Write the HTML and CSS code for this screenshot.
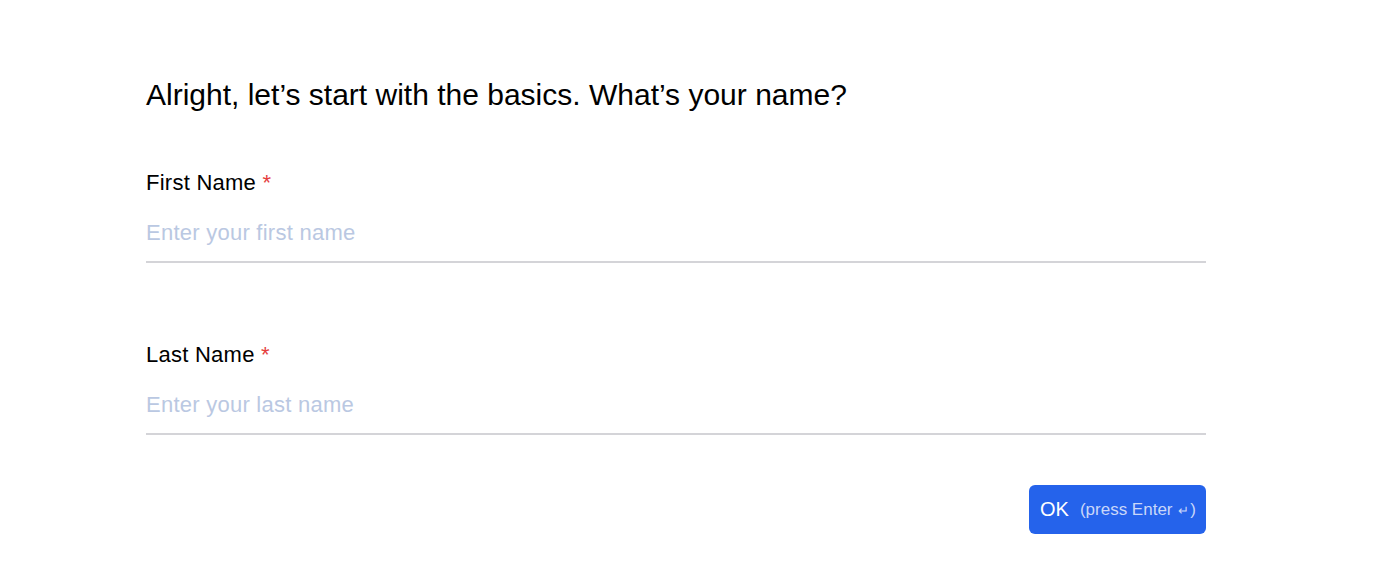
FILE: index.html
```html
<!DOCTYPE html>
<html lang="en">
<head>
<meta charset="utf-8">
<title>Name</title>
<link rel="stylesheet" href="styles.css">
</head>
<body>
<main class="page">
  <form class="form">
    <h1 class="question">Alright, let’s start with the basics. What’s your name?</h1>
    <div class="field">
      <label class="label" for="first">First Name <span class="req">*</span></label>
      <input class="input" id="first" type="text" placeholder="Enter your first name">
    </div>
    <div class="field">
      <label class="label" for="last">Last Name <span class="req">*</span></label>
      <input class="input" id="last" type="text" placeholder="Enter your last name">
    </div>
    <div class="actions">
      <button class="ok" type="button">OK <span class="hint">(press Enter <span class="arrow">↵</span>)</span></button>
    </div>
  </form>
</main>
</body>
</html>
```
FILE: styles.css
```css
html, body {
  margin: 0;
  padding: 0;
  background: #ffffff;
}
body {
  font-family: "Liberation Sans", Arial, sans-serif;
  color: #000000;
}
.page {
  padding: 77px 0 0 146px;
}
.form {
  width: 1060px;
  display: flex;
  flex-direction: column;
}
.question {
  margin: 0 0 57px;
  font-size: 30px;
  font-weight: 400;
  line-height: 36px;
}
.field {
  display: flex;
  flex-direction: column;
}
.field + .field {
  margin-top: 79px;
}
.label {
  font-size: 22px;
  line-height: 26px;
  margin-bottom: 24px;
  letter-spacing: 0.25px;
}
.req {
  color: #e53e3e;
}
.input {
  border: none;
  border-bottom: 2px solid #d4d4d8;
  outline: none;
  margin: 0;
  padding: 0 0 15px;
  font-family: "Liberation Sans", Arial, sans-serif;
  font-size: 22px;
  line-height: 26px;
  height: 26px;
  letter-spacing: 0.25px;
  color: #000;
  background: transparent;
}
.input::placeholder {
  color: #bac8e2;
}
.actions {
  display: flex;
  justify-content: flex-end;
  margin-top: 50px;
}
.ok {
  background: #2563eb;
  color: #fff;
  border: none;
  border-radius: 6px;
  height: 49px;
  width: 177px;
  padding: 0 0 0 11px;
  font-family: "Liberation Sans", Arial, sans-serif;
  font-size: 20px;
  display: flex;
  align-items: center;
  gap: 11px;
}
.hint {
  font-size: 17px;
  color: #c9d7f9;
}
.arrow {
  font-size: 13px;
  margin: 0 1px;
}
```
